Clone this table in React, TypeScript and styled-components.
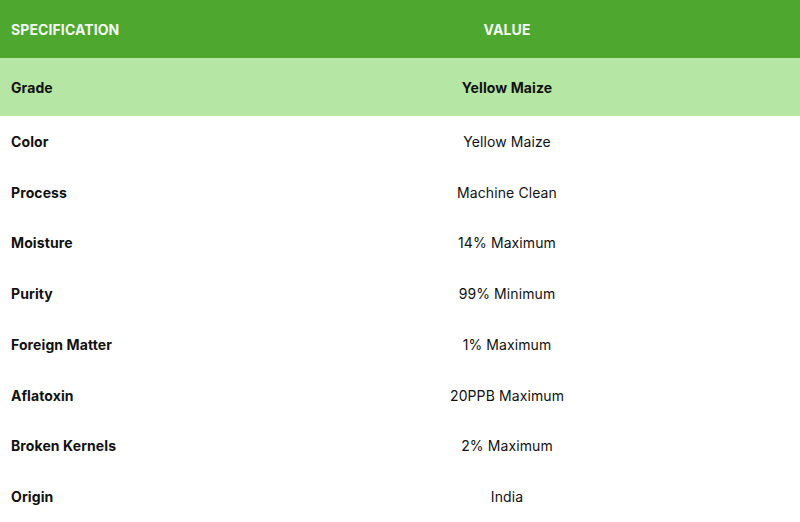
import React from "react";
import styled, { createGlobalStyle } from "styled-components";

const Global = createGlobalStyle`
  html, body { margin: 0; padding: 0; background: #ffffff; }
  body { font-family: Inter, "Open Sans", sans-serif; }
`;

const Table = styled.div`
  width: 800px;
  display: grid;
  grid-template-columns: 214px 1fr;
`;

const Row = styled.div<{ $variant?: "head" | "grade" | "plain" }>`
  display: contents;
  & > div {
    height: ${(p) => (p.$variant === "plain" ? "50.75px" : "58px")};
    background: ${(p) =>
      p.$variant === "head" ? "#4ea72e" : p.$variant === "grade" ? "#b5e6a3" : "#ffffff"};
    color: ${(p) => (p.$variant === "head" ? "#f4faf1" : "#111111")};
  }
`;

const Cell = styled.div<{ $center?: boolean; $bold?: boolean; $upper?: boolean }>`
  display: flex;
  align-items: center;
  justify-content: ${(p) => (p.$center ? "center" : "flex-start")};
  padding-left: ${(p) => (p.$center ? "0" : "11px")};
  font-size: 14px;
  font-weight: ${(p) => (p.$bold ? 700 : 400)};
  text-transform: ${(p) => (p.$upper ? "uppercase" : "none")};
  letter-spacing: 0.1px;
`;

const rows: [string, string][] = [
  ["Color", "Yellow Maize"],
  ["Process", "Machine Clean"],
  ["Moisture", "14% Maximum"],
  ["Purity", "99% Minimum"],
  ["Foreign Matter", "1% Maximum"],
  ["Aflatoxin", "20PPB Maximum"],
  ["Broken Kernels", "2% Maximum"],
  ["Origin", "India"],
];

export default function App() {
  return (
    <>
      <Global />
      <Table>
        <Row $variant="head">
          <Cell $bold $upper>Specification</Cell>
          <Cell $bold $upper $center>Value</Cell>
        </Row>
        <Row $variant="grade">
          <Cell $bold>Grade</Cell>
          <Cell $bold $center>Yellow Maize</Cell>
        </Row>
        {rows.map(([k, v]) => (
          <Row key={k} $variant="plain">
            <Cell $bold>{k}</Cell>
            <Cell $center>{v}</Cell>
          </Row>
        ))}
      </Table>
    </>
  );
}
